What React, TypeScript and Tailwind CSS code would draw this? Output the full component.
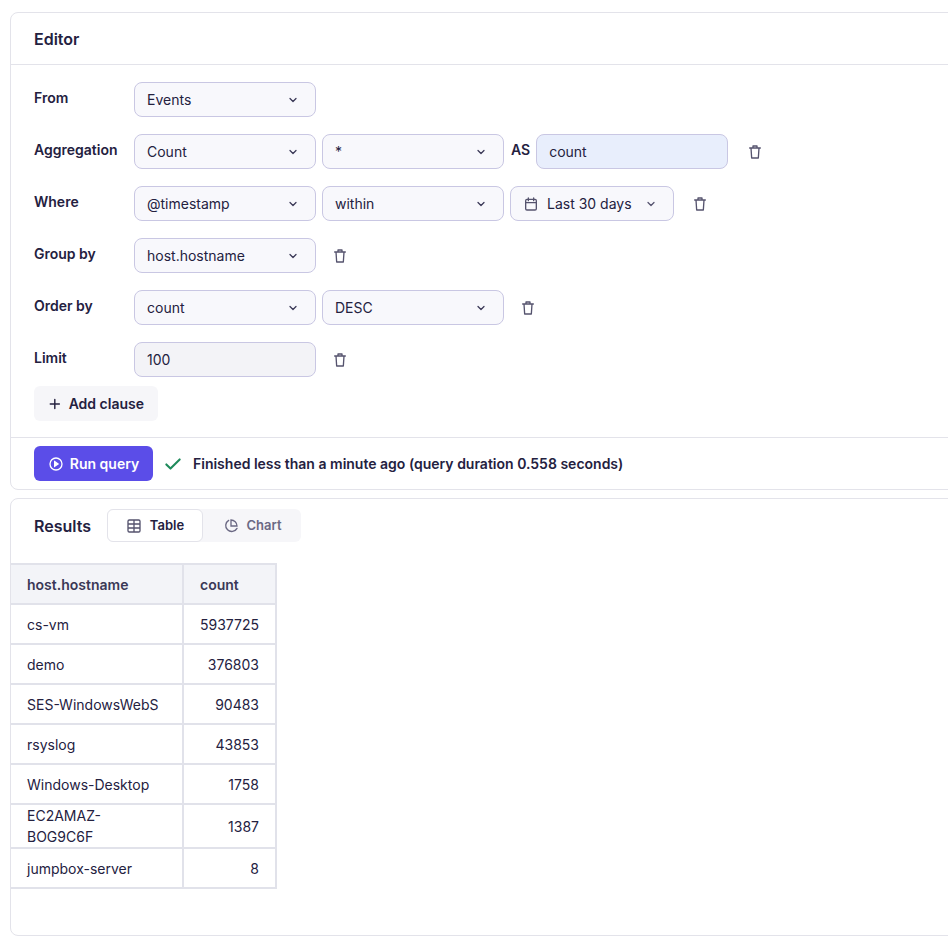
import React from "react";

const Chevron = () => (
  <svg width="12" height="12" viewBox="0 0 24 24" fill="none" stroke="currentColor" strokeWidth="2.5" strokeLinecap="round" strokeLinejoin="round"><path d="M6 9l6 6 6-6" /></svg>
);
const Trash = () => (
  <svg width="16" height="16" viewBox="0 0 24 24" fill="none" stroke="#55536e" strokeWidth="2" strokeLinecap="round" strokeLinejoin="round"><path d="M4 6h16M9 6V3h6v3M6 6l1 15h10l1-15" /></svg>
);

const Select = ({ value, w = "w-[182px]" }: { value: string; w?: string }) => (
  <div className={`${w} h-[35px] flex items-center justify-between px-3 rounded-lg border border-[#c9c7e3] bg-[#f8f8fc] text-[14px] text-[#24213f]`}>
    <span>{value}</span>
    <span className="text-[#3a3856] mr-1"><Chevron /></span>
  </div>
);

const Row = ({ label, children }: { label: string; children: React.ReactNode }) => (
  <div className="flex items-center h-[35px]">
    <div className="w-[100px] text-[14px] font-semibold text-[#24213f] -mt-1">{label}</div>
    <div className="flex items-center gap-[6px]">{children}</div>
  </div>
);

const rows: [string, string][] = [
  ["cs-vm", "5937725"], ["demo", "376803"], ["SES-WindowsWebS", "90483"], ["rsyslog", "43853"],
  ["Windows-Desktop", "1758"], ["EC2AMAZ-BOG9C6F", "1387"], ["jumpbox-server", "8"],
];

export default function App() {
  return (
    <div className="w-[948px] h-[948px] bg-white pl-[10px] pt-[12px] overflow-hidden" style={{ fontFamily: "Inter, 'Noto Sans', sans-serif" }}>
      <div className="w-[960px] border border-[#e3e3ea] rounded-lg">
        <div className="h-[52px] flex items-center px-[23px] border-b border-[#e3e3ea] text-[16px] font-semibold text-[#24213f]">Editor</div>
        <div className="px-[23px] pt-[17px] flex flex-col gap-[17px]">
          <Row label="From"><Select value="Events" /></Row>
          <Row label="Aggregation">
            <Select value="Count" />
            <Select value="*" />
            <span className="text-[14px] font-semibold text-[#24213f] ml-[1px] -mt-1">AS</span>
            <div className="w-[192px] h-[35px] flex items-center px-3 rounded-lg border border-[#c9c7e3] bg-[#e8eefc] text-[14px] text-[#24213f]">count</div>
            <span className="ml-[13px]"><Trash /></span>
          </Row>
          <Row label="Where">
            <Select value="@timestamp" />
            <Select value="within" />
            <div className="w-[164px] h-[35px] flex items-center justify-between px-3 rounded-lg border border-[#c9c7e3] bg-[#f8f8fc] text-[14px] text-[#24213f]">
              <span className="flex items-center gap-2">
                <svg width="16" height="16" viewBox="0 0 24 24" fill="none" stroke="#55536e" strokeWidth="2" strokeLinecap="round"><rect x="4" y="5" width="16" height="16" rx="2" /><path d="M8 3v4M16 3v4M4 10h16" /></svg>
                Last 30 days
              </span>
              <span className="text-[#55536e] mr-1"><Chevron /></span>
            </div>
            <span className="ml-[12px]"><Trash /></span>
          </Row>
          <Row label="Group by">
            <Select value="host.hostname" />
            <span className="ml-[10px]"><Trash /></span>
          </Row>
          <Row label="Order by">
            <Select value="count" />
            <Select value="DESC" />
            <span className="ml-[10px]"><Trash /></span>
          </Row>
          <Row label="Limit">
            <div className="w-[182px] h-[35px] flex items-center px-3 rounded-lg border border-[#c9c7e3] bg-[#f3f3f7] text-[14px] text-[#24213f]">100</div>
            <span className="ml-[10px]"><Trash /></span>
          </Row>
        </div>
        <div className="px-[23px] pt-[9px] pb-[16px]">
          <button className="h-[35px] w-[124px] whitespace-nowrap flex items-center gap-[7px] px-[14px] rounded-md bg-[#f6f6f9] text-[14px] font-semibold text-[#24213f]">
            <svg width="14" height="14" viewBox="0 0 24 24" fill="none" stroke="currentColor" strokeWidth="2.5" strokeLinecap="round"><path d="M12 4v16M4 12h16" /></svg>
            Add clause
          </button>
        </div>
        <div className="border-t border-[#e3e3ea] px-[23px] h-[52px] flex items-center gap-[10px]">
          <button className="h-[35px] w-[119px] flex items-center justify-center gap-[6px] rounded-md bg-[#5b4de8] text-white text-[14px] font-semibold">
            <svg width="16" height="16" viewBox="0 0 24 24" fill="none" stroke="white" strokeWidth="2"><circle cx="12" cy="12" r="9" /><path d="M10 8.5l5 3.5-5 3.5z" fill="white" /></svg>
            Run query
          </button>
          <svg width="20" height="20" viewBox="0 0 24 24" fill="none" stroke="#1f8a5b" strokeWidth="2.5" strokeLinecap="round" strokeLinejoin="round"><path d="M4 12.5l5 5L20 6.5" /></svg>
          <span className="text-[14px] font-semibold text-[#24213f]">Finished less than a minute ago (query duration 0.558 seconds)</span>
        </div>
      </div>
      <div className="mt-[8px] w-[960px] h-[438px] border border-[#e3e3ea] rounded-lg">
        <div className="flex items-center px-[23px] pt-[10px] gap-[16px]">
          <span className="text-[16px] font-semibold text-[#24213f]">Results</span>
          <div className="flex bg-[#f6f6f9] rounded-md">
            <div className="h-[33px] w-[96px] flex items-center justify-center gap-2 bg-white border border-[#e3e3ea] rounded-md text-[13px] font-semibold text-[#24213f]">
              <svg width="16" height="16" viewBox="0 0 24 24" fill="none" stroke="#55536e" strokeWidth="2"><rect x="3" y="3" width="18" height="18" rx="2" /><path d="M3 9h18M3 15h18M12 3v18" /></svg>
              Table
            </div>
            <div className="h-[33px] w-[98px] flex items-center justify-center gap-2 text-[13px] font-semibold text-[#6b6984]">
              <svg width="16" height="16" viewBox="0 0 24 24" fill="none" stroke="#6b6984" strokeWidth="2" strokeLinecap="round"><path d="M21 15.5A9 9 0 1 1 8.5 3.5" /><path d="M12 3a9 9 0 0 1 9 9h-9z" /></svg>
              Chart
            </div>
          </div>
        </div>
        <table className="mt-[21px] border-collapse text-[14px] text-[#24213f]">
          <thead>
            <tr className="bg-[#f3f4f8] h-[40px]">
              <th className="w-[172px] text-left font-semibold text-[#3a3856] px-4 border-2 border-l-0 border-[#e1e2ea]">host.hostname</th>
              <th className="w-[92px] text-left font-semibold text-[#3a3856] px-4 border-2 border-[#e1e2ea]">count</th>
            </tr>
          </thead>
          <tbody>
            {rows.map(([h, c]) => (
              <tr key={h} className="h-[40px]">
                <td className="px-4 border-2 border-l-0 border-[#e1e2ea]">{h}</td>
                <td className="px-4 text-right border-2 border-[#e1e2ea]">{c}</td>
              </tr>
            ))}
          </tbody>
        </table>
      </div>
    </div>
  );
}
